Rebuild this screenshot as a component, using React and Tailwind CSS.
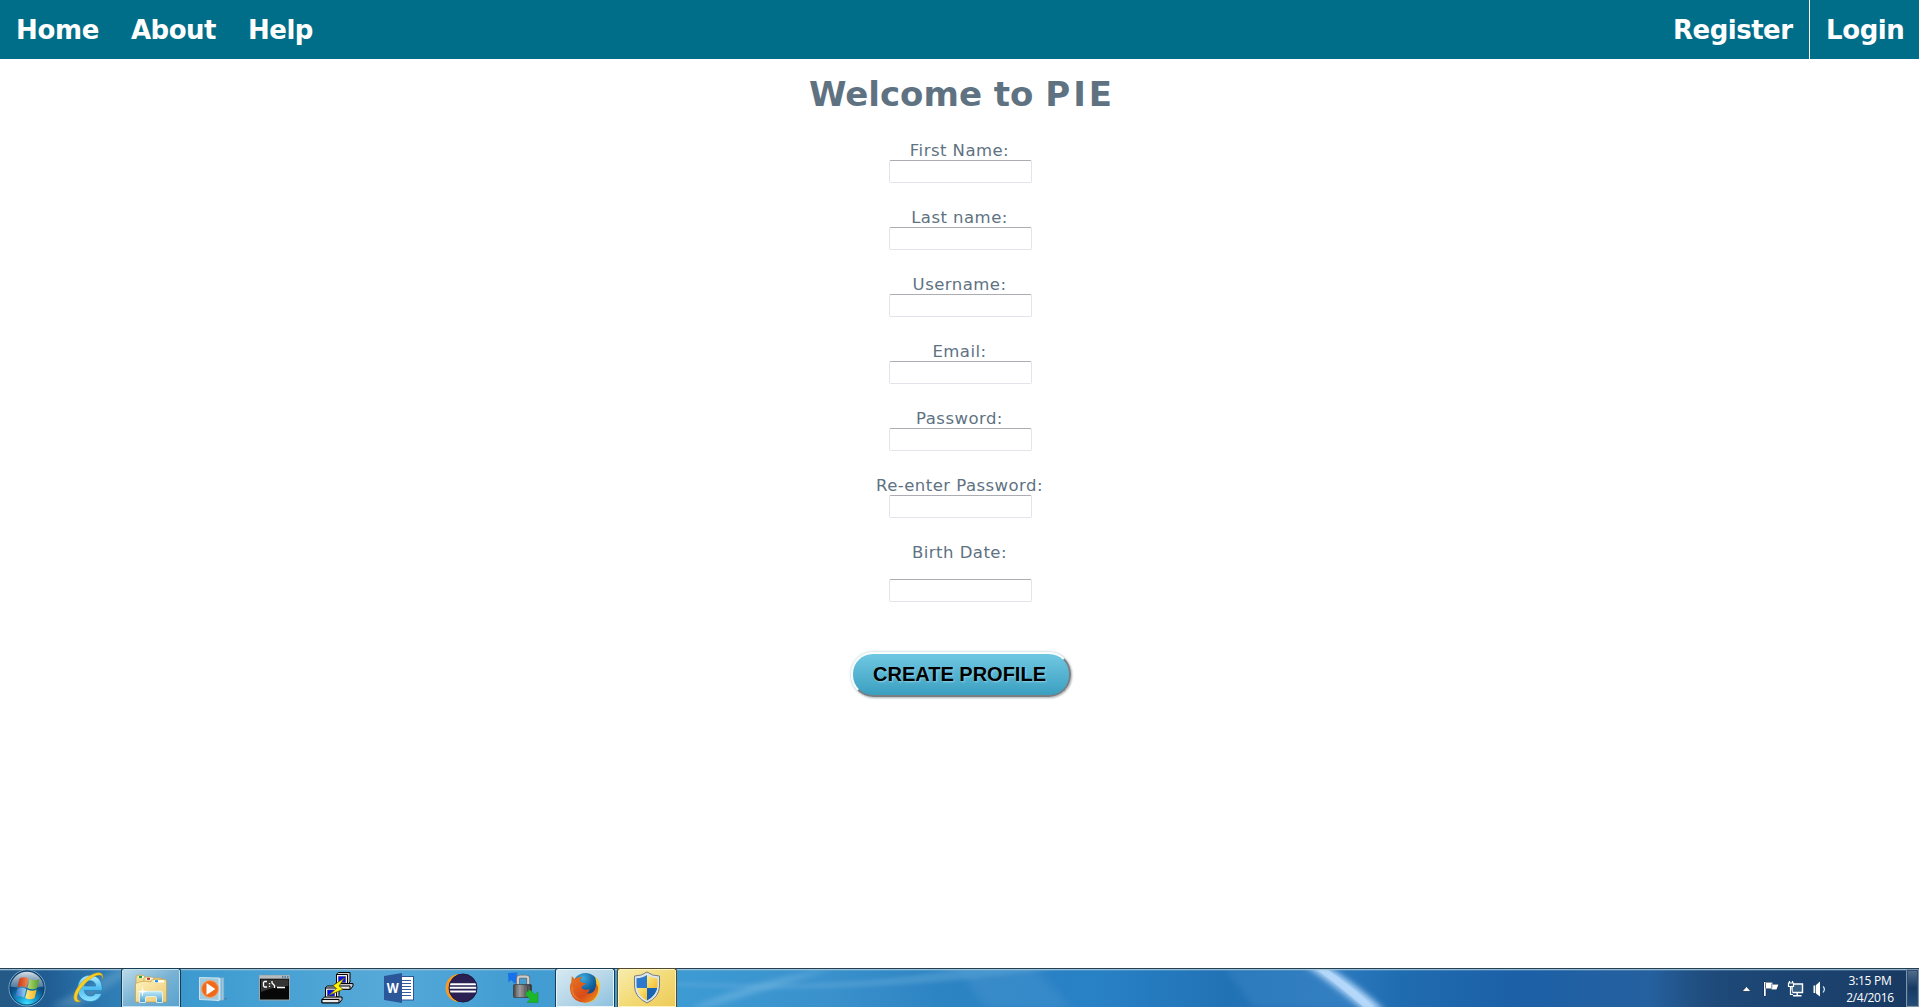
import React from "react";

const fields = ["First Name:", "Last name:", "Username:", "Email:", "Password:", "Re-enter Password:"];

const inputClass =
  "block h-[23px] w-[143px] rounded-[2px] border border-[#e3e3eb] border-t-[#abadb3] bg-white px-1 text-sm outline-none";

function NavBar() {
  return (
    <nav className="flex h-[59px] items-stretch justify-between bg-[#006e89] text-[26px] leading-[61px] font-bold text-white">
      <div className="flex">
        <a className="w-[115px] pl-4 tracking-[-0.3px]">Home</a>
        <a className="w-[117px] pl-4 tracking-[-0.5px]">About</a>
        <a className="pl-4 tracking-[-0.5px]">Help</a>
      </div>
      <div className="flex">
        <a className="w-[154px] border-r border-white pl-[17px] tracking-[-0.5px]">Register</a>
        <a className="w-[109px] pl-4 tracking-[-0.4px]">Login</a>
      </div>
    </nav>
  );
}

function Field({ label }) {
  return (
    <label className="flex h-[67px] flex-col items-center">
      <span className="h-5 -translate-x-px whitespace-nowrap leading-[22px]">{label}</span>
      <input className={inputClass} />
    </label>
  );
}

function Slot({ children, className = "" }) {
  return (
    <div className="h-[39px] w-[62px] shrink-0 px-px">
      <div className={"h-full " + className}>
        <svg width="62" height="39" viewBox="0 0 62 39" className="-ml-px block max-w-none overflow-visible">
          {children}
        </svg>
      </div>
    </div>
  );
}

function StartOrb() {
  return (
    <svg width="58" height="39" viewBox="0 0 58 39" className="block shrink-0">
      <defs>
        <radialGradient id="orb" cx=".5" cy=".95" r=".85">
          <stop offset="0" stopColor="#43e2ff" />
          <stop offset=".3" stopColor="#159bd1" />
          <stop offset=".65" stopColor="#0c4f86" />
          <stop offset="1" stopColor="#123a66" />
        </radialGradient>
        <linearGradient id="gloss" x1="0" y1="0" x2="0" y2="1">
          <stop offset="0" stopColor="#e2eaf0" stopOpacity=".95" />
          <stop offset="1" stopColor="#7b9cb8" stopOpacity=".55" />
        </linearGradient>
        <linearGradient id="red" x1="0" x2="1"><stop stopColor="#c93310" /><stop offset="1" stopColor="#f58a51" /></linearGradient>
        <linearGradient id="green" x1="0" x2="1"><stop stopColor="#b9db72" /><stop offset="1" stopColor="#549b2b" /></linearGradient>
        <linearGradient id="blue" x1="0" x2="1"><stop stopColor="#2d6fc0" /><stop offset="1" stopColor="#9ed6f5" /></linearGradient>
        <linearGradient id="yellow" x1="0" x2="1"><stop stopColor="#ffe98a" /><stop offset="1" stopColor="#f5b51b" /></linearGradient>
      </defs>
      <circle cx="27" cy="20" r="18" fill="url(#orb)" stroke="#7fb0d0" strokeWidth="1" />
      <circle cx="27" cy="20" r="17" fill="none" stroke="#10406c" strokeWidth="1" />
      <path d="M10.5 18.5A16.6 16.6 0 0 1 43.5 18.5Q27 22 10.5 18.5Z" fill="url(#gloss)" />
      <path d="M19.5 10.5Q24 8 28.5 10.5L26.5 19.5Q22 17 17.5 19.3Z" fill="url(#red)" />
      <path d="M29.7 11Q34.5 13.5 39.5 11L37 20.3Q32.5 22.5 27.6 20Z" fill="url(#green)" />
      <path d="M17.2 20.7Q21.7 18.5 26.2 20.9L24 29.5Q19.5 27.2 15.2 29.2Z" fill="url(#blue)" />
      <path d="M27.3 21.5Q32 24 36.6 21.8L34.5 30Q30 32.5 25.2 30Z" fill="url(#yellow)" />
    </svg>
  );
}

function ExplorerE() {
  return (
    <Slot>
      <defs>
        <linearGradient id="ie" x1="0" y1="0" x2="0" y2="1">
          <stop stopColor="#b8efff" /><stop offset=".5" stopColor="#4dbdf0" /><stop offset="1" stopColor="#8ee4ff" />
        </linearGradient>
      </defs>
      <path fillRule="evenodd" d="M32 7.3C39.5 7.3 44.5 12.5 44.3 22.4H26.3C26.7 26 29 28 32.3 28C35 28 36.6 26.9 37.5 25.4H43.7C41.8 30.5 37.6 33.5 32 33.5C24.3 33.5 19.6 28.3 19.6 20.6C19.6 12.8 24.5 7.3 32 7.3ZM26.4 18.1H37.8C37.4 14.7 35.3 12.8 32.1 12.8C29 12.8 26.9 14.8 26.4 18.1Z" fill="url(#ie)" stroke="#1877b8" strokeWidth=".6" />
      <path d="M44.6 10.8C46 3.8 39.5 3 31.8 7.8C21.5 14.2 12.8 27.3 17 32.8C18 34.2 20.6 34.3 22.7 33C18.5 33 18 29 21 23.5C26 14.5 36.5 6.6 41.8 7.1C43.7 7.3 44.6 8.5 44.6 10.8Z" fill="#f9cf25" stroke="#c99911" strokeWidth=".5" />
    </Slot>
  );
}

function FilesIcon() {
  return (
    <Slot className="rounded-t-[3px] border border-b-0 border-[#173d52] bg-linear-to-br from-[#bddbe9] via-[#78b2d4] to-[#58a2ce] shadow-[inset_0_0_0_1px_#c4e2ef] [&>svg]:-mt-px [&>svg]:-ml-0.5">
      <defs>
        <linearGradient id="folder" x1="0" y1="0" x2="1" y2="1"><stop stopColor="#fff4bd" /><stop offset="1" stopColor="#ebc873" /></linearGradient>
        <linearGradient id="stand" x1="0" y1="0" x2="0" y2="1"><stop stopColor="#c2edfb" /><stop offset="1" stopColor="#4a9ccc" /></linearGradient>
      </defs>
      <path d="M16 9Q16 7.2 18 7.2H23L26 10H41V31L16 34Z" fill="#f2dc94" stroke="#c8a14a" strokeWidth=".7" />
      <rect x="18.5" y="8" width="5" height="2" fill="#fff" /><rect x="19" y="8" width="3" height="2" fill="#1aa53a" />
      <path d="M24 12.5V10.5Q24 9 26 9H31L34 11.5H45V31H24Z" fill="#f6e4a4" stroke="#c8a14a" strokeWidth=".7" />
      <rect x="26" y="9.8" width="7" height="2" fill="#fff" /><rect x="27" y="9.8" width="3" height="2" fill="#bc3421" />
      <path d="M15.5 15.5Q22 12 31 14V13Q31 11.3 33 11.3H44Q46.5 11.3 46.5 13.3V34H15.5Z" fill="url(#folder)" stroke="#c99d45" strokeWidth=".7" />
      <rect x="34" y="12.2" width="10" height="2.2" fill="#fff" /><rect x="35" y="12.2" width="3" height="2" fill="#1690e8" />
      <path d="M19.5 25Q19.5 23.2 21.5 23.2H40.5Q42.5 23.2 42.5 25V34.5H36.5V30Q36.5 28.5 35 28.5H27Q25.5 28.5 25.5 30V34.5H19.5Z" fill="url(#stand)" stroke="#e8faff" strokeWidth=".8" />
      <path d="M22.5 18L23.3 22.8L28 23.6L23.3 24.4L22.5 29L21.7 24.4L17 23.6L21.7 22.8Z" fill="#fff" />
    </Slot>
  );
}

function PlayerIcon() {
  return (
    <Slot>
      <path d="M42 30.5L45.5 30L43 32Z" fill="#3d79a1" />
      <path d="M34 10L42 9.5V32L36 33Z" fill="#9cc7dd" stroke="#5f9fc5" strokeWidth=".7" />
      <path d="M33 10L39 9.7V32.5L34 33Z" fill="#c4e1ec" stroke="#5f9fc5" strokeWidth=".7" />
      <path d="M17.5 9.5L37 10V32.5L17.5 31.5Z" fill="#9fcbe0" stroke="#dceff6" strokeWidth=".8" />
      <circle cx="28" cy="21" r="8.5" fill="#ef6b1b" stroke="#f8a166" />
      <path d="M24.5 15L33.3 21L24.5 27Z" fill="#fff" />
    </Slot>
  );
}

function CommandIcon() {
  return (
    <Slot>
      <rect x="15.5" y="7.5" width="30" height="24.5" fill="#080808" stroke="#9ba4aa" />
      <rect x="15.5" y="7.5" width="30" height="3.2" fill="#b7bbbd" />
      <path d="M38 9H39.5M40.5 9H42M43 9H44.5" stroke="#3871a0" strokeWidth="1.4" />
      <path d="M17 11.5H44.5V18Q31 18 17 24Z" fill="#353535" />
      <path d="M23 13.5H20.5L19.5 14.5V18L20.5 19H23M25.5 15V16.3M25.5 17.7V19M28 13V15L30.5 17.5V20M33 19.5H41" fill="none" stroke="#fff" strokeWidth="1.3" />
    </Slot>
  );
}

function Computer({ x, y }) {
  return (
    <g transform={`translate(${x} ${y})`} stroke="#000" strokeWidth="1">
      <path d="M4 2L6 .5H17.5V10L15 12.5H4Z" fill="#cfcfcf" />
      <path d="M4 2.5H15V12.5H4Z" fill="#f1f1f1" />
      <path d="M6 4.5H13V10.5H6Z" fill="#0710f0" stroke="#334" strokeWidth=".5" />
      <path d="M.5 14L3 11.5H20.5V14L18 17.3H.5Z" fill="#c4c4c4" />
      <path d="M.5 14H17.5V17.3H.5Z" fill="#e9e9e9" />
    </g>
  );
}

function TerminalIcon() {
  return (
    <Slot>
      <Computer x="26.5" y="4" />
      <Computer x="15.5" y="17.5" />
      <path d="M38.5 10L27 17.5L30.5 20.5L22.5 27.5L37 21.3L33 18Z" fill="#fff207" stroke="#5a5500" strokeWidth=".7" />
    </Slot>
  );
}

function WordIcon() {
  return (
    <Slot>
      <rect x="32" y="8.5" width="13.5" height="23.5" fill="#fff" stroke="#2b579a" />
      <path d="M34 12.5H43M34 15.5H43M34 18.5H43M34 21.5H43M34 24.5H43M34 27.5H43" stroke="#315d9d" />
      <path d="M16 8L34 5V35L16 32Z" fill="#2b579a" />
      <text x="18.7" y="25" fontSize="14" fontWeight="700" fontFamily="Open Sans, sans-serif" fill="#fff" textLength="12" lengthAdjust="spacingAndGlyphs">W</text>
    </Slot>
  );
}

function EclipseIcon() {
  return (
    <Slot>
      <defs><clipPath id="eclipse"><circle cx="33" cy="20" r="13.3" /></clipPath></defs>
      <circle cx="29.5" cy="20" r="14" fill="#f59a25" />
      <circle cx="33" cy="20" r="14" fill="#2a2053" stroke="#1e173c" />
      <g clipPath="url(#eclipse)"><path d="M18 16.2H48M18 19.8H48M18 23.4H48" stroke="#fff" strokeWidth="2" /></g>
    </Slot>
  );
}

function TransferIcon() {
  return (
    <Slot>
      <defs><linearGradient id="lock" x1="0" x2="1"><stop stopColor="#434343" /><stop offset=".35" stopColor="#9c9c9c" /><stop offset=".7" stopColor="#565656" /><stop offset="1" stopColor="#333" /></linearGradient></defs>
      <path d="M16 5L26 4.5L24.2 7L28 10.5L23 15.5L19 12L16.5 14.5Z" fill="#1671ea" />
      <path d="M26 17.5V10.5Q26 8.7 28 8.7H34Q36.2 8.7 36.2 10.5V17.5" fill="none" stroke="#6c7276" strokeWidth="4" />
      <path d="M26 17V10.5Q26 8.7 28 8.7H34Q36.2 8.7 36.2 10.5V17" fill="none" stroke="#c9cdd0" strokeWidth="2.2" />
      <rect x="21.5" y="16.5" width="18" height="13" rx="1" fill="url(#lock)" stroke="#333" strokeWidth=".6" />
      <path d="M25 18V29M28 18V29M31 18V29M34 18V29M37 18V29" stroke="#a3a3a3" strokeWidth=".4" />
      <path d="M34 24.5L38 21.8L43 26.8L46 23.8V34.5H35L38.3 31.2L34 27.5Z" fill="#1db82a" stroke="#149122" strokeWidth=".5" />
    </Slot>
  );
}

function FirefoxIcon() {
  return (
    <Slot className="rounded-t-[3px] border border-b-0 border-[#173d52] bg-linear-to-br from-[#d7eaf3] via-[#b7d7e8] to-[#8bc0df] shadow-[inset_0_0_0_1px_#e9f5fa] [&>svg]:-mt-px [&>svg]:-ml-0.5">
      <defs>
        <radialGradient id="globe" cx=".4" cy=".2" r=".9"><stop stopColor="#3cacdd" /><stop offset=".5" stopColor="#13609f" /><stop offset="1" stopColor="#082c61" /></radialGradient>
        <linearGradient id="fox" x1="0" y1="0" x2="1" y2="1"><stop stopColor="#e57925" /><stop offset=".6" stopColor="#d94b17" /><stop offset="1" stopColor="#ee9b20" /></linearGradient>
      </defs>
      <circle cx="31.5" cy="18" r="13" fill="url(#globe)" />
      <path d="M41 8Q47.2 13.5 45.8 21Q43.5 34.7 31 34.7L34 28Q40 26.5 41.8 20Q43 14 41 8Z" fill="#f5c72b" />
      <path d="M17.8 8L20.8 11Q24 8.5 28.3 9.3Q26 11 25.8 13.3Q28 15 31.5 15.2Q31 17.3 27.8 18.3Q27 20.5 30 21.5Q33 22.3 35.5 21Q35.3 24.3 32.5 25.3Q38 26.5 41 21.5Q42.5 19.5 42.3 15.5Q45.2 19 43.6 25Q40.5 34.7 31 34.7Q20 34.5 17 25.5Q14.6 19 17.3 14Z" fill="url(#fox)" />
      <path d="M19 18Q18 28 28 32.5Q19.5 31 17.5 24Q16.2 19 19 18Z" fill="#ef812c" opacity=".7" />
    </Slot>
  );
}

function ShieldIcon() {
  return (
    <Slot className="rounded-t-[3px] border border-b-0 border-[#514b2b] bg-linear-to-br from-[#f9edac] via-[#f3db78] to-[#edca57] shadow-[inset_0_0_0_1px_#fff3bd] [&>svg]:-mt-px [&>svg]:-ml-0.5">
      <defs>
        <clipPath id="shield"><path d="M31 7Q27 10 20.5 10.2V18Q21 27 31 32.5Q41 27 41.5 18V10.2Q35 10 31 7Z" /></clipPath>
        <linearGradient id="sy" x1="0" y1="0" x2="1" y2="1"><stop stopColor="#fff08b" /><stop offset="1" stopColor="#f1b92b" /></linearGradient>
      </defs>
      <path d="M31 4Q26 8 18.5 8V18Q18.5 29 31 35Q43.5 29 43.5 18V8Q36 8 31 4Z" fill="#dce5e9" stroke="#777e80" strokeWidth="1" />
      <g clipPath="url(#shield)">
        <path d="M20 6H31V20H20Z" fill="#2d79cc" /><path d="M31 6H42V20H31Z" fill="url(#sy)" />
        <path d="M20 20H31V34H20Z" fill="url(#sy)" /><path d="M31 20H42V34H31Z" fill="#1764b5" />
      </g>
    </Slot>
  );
}

function Glass() {
  return (
    <svg className="absolute inset-0 block" width="1919" height="39" viewBox="0 0 1919 39" preserveAspectRatio="none">
      <defs>
        <linearGradient id="bar" gradientUnits="userSpaceOnUse" x1="0" y1="0" x2="1919" y2="0">
          <stop stopColor="#245985" /><stop offset=".025" stopColor="#205d93" /><stop offset=".055" stopColor="#2d7ab2" />
          <stop offset=".1" stopColor="#3d9bd0" /><stop offset=".2" stopColor="#55a9d8" /><stop offset=".27" stopColor="#439dd2" />
          <stop offset=".36" stopColor="#3d9ad3" /><stop offset=".43" stopColor="#3a91cc" /><stop offset=".49" stopColor="#2d84c2" />
          <stop offset=".575" stopColor="#2880c6" /><stop offset=".64" stopColor="#2172b4" /><stop offset=".7" stopColor="#2a78bd" />
          <stop offset=".73" stopColor="#206cb0" /><stop offset=".79" stopColor="#1c60a7" /><stop offset=".86" stopColor="#25609f" />
          <stop offset=".885" stopColor="#204e80" /><stop offset=".9" stopColor="#1d4877" /><stop offset=".96" stopColor="#1b406c" /><stop offset="1" stopColor="#17375f" />
        </linearGradient>
        <filter id="soft" x="-20%" y="-50%" width="140%" height="200%"><feGaussianBlur stdDeviation="3" /></filter>
        <filter id="softer" x="-20%" y="-50%" width="140%" height="200%"><feGaussianBlur stdDeviation="6 2" /></filter>
      </defs>
      <rect width="1919" height="39" fill="url(#bar)" />
      <path d="M50 39L120 0H138L78 39Z" fill="#82b5d6" opacity=".35" filter="url(#soft)" />
      <path d="M690 41Q750 14 835 0Q790 14 700 41Z" fill="#92caed" opacity=".45" filter="url(#soft)" />
      <path d="M670 17Q850 29 1060 0H960Q850 22 670 14Z" fill="#7ebbe4" opacity=".3" filter="url(#softer)" />
      <path d="M958 0H1035L1070 39H985Z" fill="#59a0d5" opacity=".28" filter="url(#softer)" />
      <path d="M1224 0H1308L1378 39H1254Z" fill="#4c91d0" opacity=".28" filter="url(#soft)" />
      <path d="M1303 -4H1323Q1355 15 1385 43H1365Q1336 18 1303 -4Z" fill="#b4d8fa" filter="url(#soft)" />
      <path d="M1309 -4H1319Q1352 17 1378 43H1368Q1340 18 1309 -4Z" fill="#b8dafb" opacity=".7" />
      <rect width="1919" height="1" fill="#263f51" />
      <rect y="1" width="1919" height="1" fill="#a2c5da" opacity=".9" />
      <rect y="2" width="1919" height="1" fill="#a2c5da" opacity=".25" />
    </svg>
  );
}

function Tray() {
  return (
    <div className="ml-auto flex h-[39px] items-center text-white">
      <svg width="100" height="39" viewBox="1736 0 100 39" className="block">
        <path d="M1742 23.5L1746.5 18.5L1751 23.5Z" fill="#f8fafc" stroke="#18314c" strokeWidth=".8" />
        <g stroke="#0b2440" strokeWidth="1" paintOrder="stroke">
          <path d="M1764 14H1765.7V28H1764Z" fill="#fff" />
          <path d="M1766 14.5H1772.5V16.5H1778.5L1776.5 21.5H1771.5V20.5H1766Z" fill="#fff" />
        </g>
        <path d="M1771.8 15.5V20.5" stroke="#49647f" strokeWidth=".8" />
        <path d="M1792 16H1802.5V24.5H1792ZM1797.2 25V27.5M1793 27.7H1801.5" fill="#385d82" stroke="#fff" strokeWidth="1.4" />
        <path d="M1788.5 15H1793.5V18.5H1788.5ZM1789.5 13V15M1792.5 13V15M1790.5 19V26.5H1793" fill="#294e76" stroke="#fff" strokeWidth="1.2" />
        <path d="M1813.5 17.5H1815.3V25H1813.5ZM1816 17L1820 13.5V28.5L1816 25.5Z" fill="#fff" />
        <path d="M1823 18.5Q1825.8 21 1823 24.5" fill="none" stroke="#dceaf5" strokeWidth="1.2" />
      </svg>
      <div className="mr-0.5 flex h-[39px] w-[68px] flex-col items-center pt-[4px] text-center font-['Open_Sans',sans-serif] text-[12px] leading-[17px] tracking-[-0.3px] text-white">
        <span>3:15 PM</span>
        <span>2/4/2016</span>
      </div>
      <div className="mt-px h-[38px] w-[13px] border border-[#7795b0] bg-linear-to-b from-[#536f8d] via-[#183a61] to-[#234d7b] shadow-[inset_0_0_0_1px_#314e6e]" />
    </div>
  );
}

function Taskbar() {
  return (
    <footer className="relative h-[39px] w-full overflow-hidden">
      <Glass />
      <div className="relative flex h-full">
        <StartOrb />
        <ExplorerE />
        <FilesIcon />
        <PlayerIcon />
        <CommandIcon />
        <TerminalIcon />
        <WordIcon />
        <EclipseIcon />
        <TransferIcon />
        <FirefoxIcon />
        <ShieldIcon />
        <Tray />
      </div>
    </footer>
  );
}

export default function App() {
  return (
    <div className="flex h-[1007px] w-full flex-col overflow-hidden bg-white font-[Verdana,'DejaVu_Sans',sans-serif] text-[#5e7282]">
      <NavBar />
      <main className="flex flex-1 flex-col items-center pl-[2px]">
        <h1 className="mt-[14px] h-[42px] text-[34px] leading-[42px] font-bold whitespace-nowrap">
          Welcome to <span className="-mr-[3px] tracking-[3px]">PIE</span>
        </h1>
        <form className="mt-[25px] flex flex-col items-center text-[16.5px] tracking-[0.46px]">
          {fields.map((label) => (
            <Field key={label} label={label} />
          ))}
          <label className="flex flex-col items-center">
            <span className="h-[37px] -translate-x-px leading-[22px]">Birth Date:</span>
            <input className={inputClass} />
          </label>
          <button
            type="button"
            className="mt-[50px] h-[45px] w-[220px] rounded-[22px] border-2 border-t-[#f7fcfd] border-l-[#f7fcfd] border-r-[#7b7f81] border-b-[#7b7f81] bg-linear-to-b from-[#6fc8e2] to-[#3a9fc0] pr-[2px] pb-[2px] font-['Liberation_Sans',sans-serif] text-[20px] leading-none font-bold tracking-normal text-black shadow-[0_0_3px_#b3c9d0,1px_1px_2px_#b5b5b5] [text-shadow:1px_1px_2px_#8fd3e8]"
          >
            CREATE PROFILE
          </button>
        </form>
      </main>
      <Taskbar />
    </div>
  );
}
